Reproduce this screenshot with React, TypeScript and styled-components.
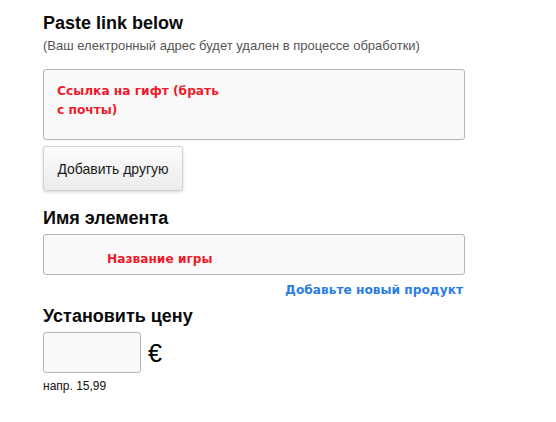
import React from 'react';
import styled, { createGlobalStyle } from 'styled-components';

const GlobalStyle = createGlobalStyle`
  html, body {
    margin: 0;
    padding: 0;
    background: #fff;
  }
  body {
    font-family: "Liberation Sans", Arial, sans-serif;
    color: #111;
  }
`;

const Page = styled.main`
  width: 422px;
  padding: 13px 0 0 43px;
`;

const Heading = styled.h2<{ $top?: number }>`
  margin: ${({ $top }) => $top ?? 0}px 0 0;
  font-size: 18px;
  line-height: 21px;
  font-weight: 700;
  color: #0a0a0a;
`;

const Hint = styled.p`
  margin: 4px 0 0;
  font-size: 13px;
  line-height: 15px;
  color: #555;
`;

const Field = styled.div<{ $height: number; $padTop: number; $padLeft: number }>`
  box-sizing: border-box;
  height: ${({ $height }) => $height}px;
  padding: ${({ $padTop }) => $padTop}px 0 0 ${({ $padLeft }) => $padLeft}px;
  border: 1px solid #b4b4b4;
  border-radius: 3px;
  background: #f9f9f9;
`;

const LinkField = styled(Field)`
  margin-top: 16px;
`;

const NameField = styled(Field)`
  margin-top: 5px;
`;

const Note = styled.span<{ $width?: number }>`
  display: block;
  width: ${({ $width }) => ($width ? `${$width}px` : 'auto')};
  font-family: "DejaVu Sans", Verdana, sans-serif;
  font-size: 12.2px;
  line-height: 19px;
  font-weight: 700;
  color: #ee1a2c;
`;

const AddButton = styled.button`
  display: block;
  box-sizing: border-box;
  width: 140px;
  height: 45px;
  margin-top: 6px;
  padding: 0;
  border: 1px solid #d2d2d2;
  border-radius: 3px;
  background: linear-gradient(#fcfcfc, #ececec);
  box-shadow: 0 1px 3px rgba(0, 0, 0, 0.18);
  font-family: "Liberation Sans", Arial, sans-serif;
  font-size: 14px;
  color: #1a1a1a;
`;

const ProductLink = styled.a`
  display: block;
  margin: 8px 2px 0 0;
  text-align: right;
  font-family: "DejaVu Sans", Verdana, sans-serif;
  font-size: 12.2px;
  line-height: 15px;
  font-weight: 700;
  color: #2b7de1;
  text-decoration: none;
`;

const PriceRow = styled.div`
  display: flex;
  align-items: center;
  gap: 7px;
  margin-top: 5px;
`;

const PriceInput = styled.div`
  box-sizing: border-box;
  width: 98px;
  height: 41px;
  border: 1px solid #b4b4b4;
  border-radius: 3px;
  background: #f9f9f9;
`;

const Currency = styled.span`
  font-size: 25px;
  line-height: 26px;
  color: #000;
`;

const Example = styled.p`
  margin: 6px 0 0;
  font-size: 12px;
  line-height: 14px;
  color: #111;
`;

export default function App() {
  return (
    <>
      <GlobalStyle />
      <Page>
        <Heading>Paste link below</Heading>
        <Hint>(Ваш електронный адрес будет удален в процессе обработки)</Hint>
        <LinkField $height={71} $padTop={12} $padLeft={13}>
          <Note $width={170}>Ссылка на гифт (брать с почты)</Note>
        </LinkField>
        <AddButton type="button">Добавить другую</AddButton>

        <Heading $top={17}>Имя элемента</Heading>
        <NameField $height={41} $padTop={15} $padLeft={63}>
          <Note>Название игры</Note>
        </NameField>
        <ProductLink href="#">Добавьте новый продукт</ProductLink>

        <Heading $top={8}>Установить цену</Heading>
        <PriceRow>
          <PriceInput />
          <Currency>€</Currency>
        </PriceRow>
        <Example>напр. 15,99</Example>
      </Page>
    </>
  );
}
